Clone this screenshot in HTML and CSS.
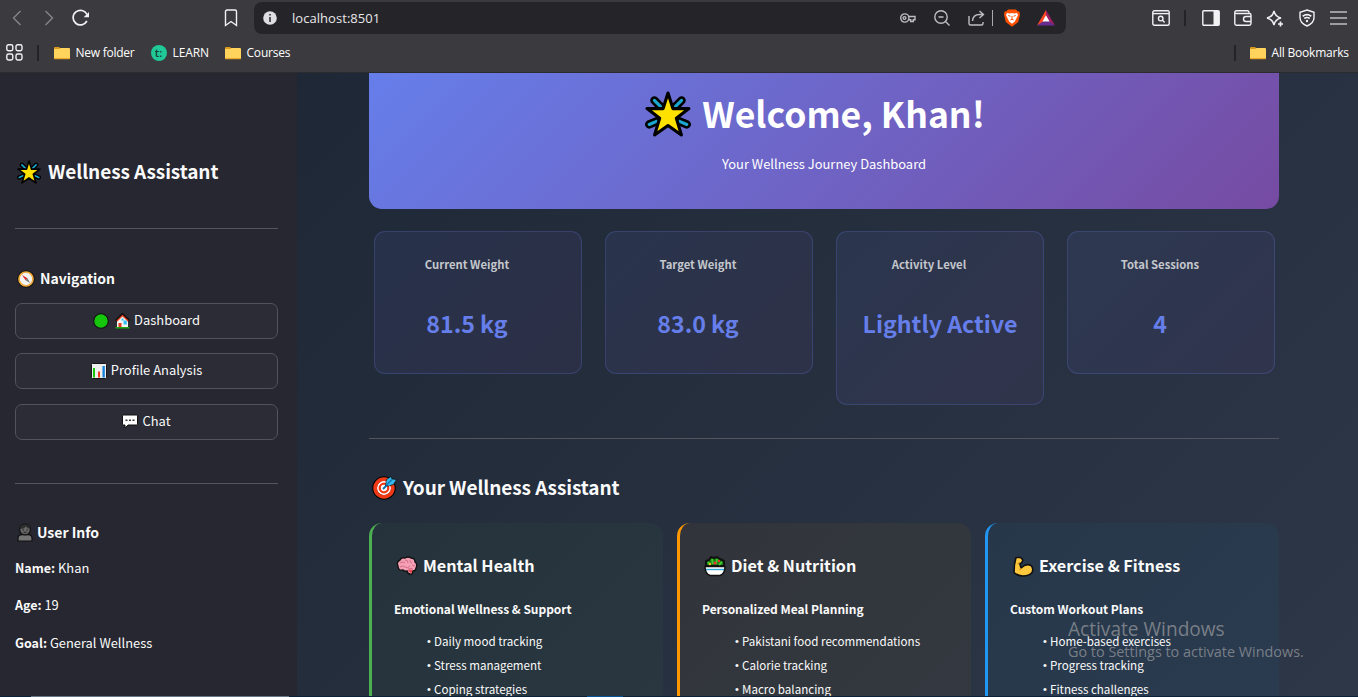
FILE: index.html
```
<!DOCTYPE html>
<html lang="en">
<head>
<meta charset="utf-8">
<title>Wellness Assistant</title>
<link rel="stylesheet" href="styles.css">
</head>
<body>
<svg class="defs" width="0" height="0" aria-hidden="true">
  <symbol id="star" viewBox="0 0 44 44">
    <g stroke="#000" stroke-width="8" stroke-linecap="round"><path d="M9 9l6 6M35 9l-6 6M4 32l7-3M40 32l-7-3"/></g>
    <g stroke="#1ba8d0" stroke-width="3" stroke-linecap="round"><path d="M9 9l6 6M35 9l-6 6M4 32l7-3M40 32l-7-3"/></g>
    <path d="M22 2l4.700 14.800H42L30 26l4.800 16L22 33 9.200 42 14 26 2 16.800h15.300z" fill="#ffe100" stroke="#000" stroke-width="3" stroke-linejoin="round"/>
  </symbol>
  <symbol id="folder" viewBox="0 0 16 14">
    <path d="M0 2a1 1 0 0 1 1-1h4l2 2H0z" fill="#d9991c"/><path d="M0 3h5l1.500-1H15a1 1 0 0 1 1 1v9a1 1 0 0 1-1 1H1a1 1 0 0 1-1-1z" fill="#ffd35c"/><path d="M0 12h16a1 1 0 0 1-1 1.200H1A1 1 0 0 1 0 12z" fill="#e5a62b"/>
  </symbol>
</svg>

<header class="chrome">
  <div class="toolbar">
    <div class="tools-left">
      <svg class="back" width="10" height="16" viewBox="0 0 10 16"><path d="M8.500 1L1.500 8l7 7" class="ln dim"/></svg>
      <svg class="fwd" width="10" height="16" viewBox="0 0 10 16"><path d="M1.500 1l7 7-7 7" class="ln dim"/></svg>
      <svg class="reload" width="18" height="18" viewBox="0 0 18 18"><path d="M14.900 12A7.300 7.300 0 1 1 15 5.500" class="ln w17"/><path d="M17 3v5.300h-5.300z" fill="#f2f2f4"/></svg>
      <svg class="mark" width="14" height="18" viewBox="0 0 14 18"><path d="M1.500 2.500q0-1.500 1.500-1.500h8q1.500 0 1.500 1.500V16.500L7 12.500 1.500 16.500z" class="ln"/></svg>
    </div>
    <div class="address">
      <svg class="info" width="14" height="14" viewBox="0 0 14 14"><circle cx="7" cy="7" r="6.800" fill="#dfdfe3"/><path d="M7 6v5M7 3v1.600" stroke="#28272c" stroke-width="1.500"/></svg>
      <span class="url">localhost:8501</span>
      <svg class="key" width="16" height="12" viewBox="0 0 16 12"><circle cx="4.800" cy="6" r="4.100" class="ln soft"/><circle cx="4.500" cy="6" r="1.400" class="ln soft"/><path d="M8.700 4.500H15v3.200h-1.700V9.500h-2.600V7.700H8.600" class="ln soft"/></svg>
      <svg class="mag" width="16" height="16" viewBox="0 0 16 16"><circle cx="7" cy="7" r="6.200" class="ln soft"/><path d="M4.500 7h5M11.500 11.500l4 4" class="ln soft"/></svg>
      <svg class="share" width="17" height="16" viewBox="0 0 17 16"><path d="M1 6v7.500Q1 15 2.500 15h11q1.500 0 1.500-1.500V12M4.500 11q.5-6.500 7-6.500h3.800M11.500 1l4 3.500-4 3.500" class="ln soft"/></svg>
      <span class="bar"></span>
      <svg class="brave" width="16" height="18" viewBox="0 0 16 18"><path d="M4 .5h8l1.500 1.800 1.800.2.700 3-1.800 7.500L8 17.700 1.800 13 0 5.500l.7-3 1.800-.2z" fill="#ff5000"/><path d="M3 4l3 .5L8 4l2 .5 3-.5 1 2.300-2.300 4.400-.9 1.700L8 14.800l-2.800-2.400-.9-1.700L2 6.300z" fill="#fff"/><path d="M4.300 6.500l2.200.8M11.700 6.500l-2.200.8M8 7v3.300M6.300 11L8 10.200l1.700.8" stroke="#ff5000" stroke-width="1" fill="none"/></svg>
      <svg class="bat" width="18" height="16" viewBox="0 0 18 16"><path d="M9 0L0 15.500l9-5z" fill="#ff4724"/><path d="M9 0l9 15.500-9-5z" fill="#9e1f63"/><path d="M0 15.500h18l-6-4H6z" fill="#662d91"/><path d="M9 5.300l3.500 6.300h-7z" fill="#fff"/></svg>
    </div>
    <div class="tools-right">
      <svg width="18" height="16" viewBox="0 0 18 16"><rect x=".8" y=".8" width="16.400" height="14.400" rx="1.500" class="ln"/><path d="M1 3.600h16" class="ln"/><circle cx="8.700" cy="8.600" r="2.300" class="ln"/><path d="M10.500 10.300l2.100 2.100" class="ln"/></svg>
      <span class="sep s1"></span>
      <svg class="panel" width="18" height="16" viewBox="0 0 18 16"><rect x=".8" y=".8" width="16.400" height="14.400" rx="1" class="ln"/><path d="M11.500 1H17v14h-5.500z" fill="#f2f2f4"/></svg>
      <svg class="wallet" width="18" height="16" viewBox="0 0 18 16"><path d="M15 3V2.200Q15 .8 13.500.8H2.500Q.8.800.8 2.500v11q0 1.700 1.700 1.700h12.800q1.700 0 1.700-1.700V5q0-1.500-1.500-1.500H2.500Q.8 3.500.8 2.300M17 6.500h-5a2.500 2.500 0 0 0 0 5h5" class="ln"/></svg>
      <svg class="spark" width="18" height="17" viewBox="0 0 18 17"><path d="M8 1q1.200 5.800 7 7-5.800 1.200-7 7Q6.800 9.200 1 8q5.800-1.200 7-7z" class="ln"/><path d="M12 14h5M14.500 11.500v5" stroke="#3b3a3e" stroke-width="3.500"/><path d="M12 14h5M14.500 11.500v5" class="ln w17"/></svg>
      <svg class="shield" width="16" height="18" viewBox="0 0 16 18"><path d="M8 1l7 2.300v5.200Q15 14 8 17 1 14 1 8.500V3.300z" class="ln"/><path d="M3.700 7.200q4.300-3.200 8.600 0M5.300 9.500q2.700-2 5.400 0" class="ln w17"/><circle cx="8" cy="12" r="1.200" fill="#f2f2f4"/></svg>
      <svg class="menu" width="17" height="14" viewBox="0 0 17 14"><path d="M0 1h17M0 7h17M0 13h17" class="ln soft"/></svg>
    </div>
  </div>
  <div class="bookmarks">
    <svg class="apps" width="17" height="17" viewBox="0 0 17 17"><g class="ln"><rect x=".8" y=".8" width="6" height="6" rx="1.700"/><rect x="10" y=".8" width="6" height="6" rx="1.700"/><rect x=".8" y="10" width="6" height="6" rx="1.700"/><rect x="10" y="10" width="6" height="6" rx="1.700"/></g></svg>
    <span class="sep s2"></span>
    <svg class="folder" width="16" height="14"><use href="#folder"/></svg><span class="bm b1">New folder</span>
    <span class="learn">t:</span><span class="bm b2">LEARN</span>
    <svg class="folder" width="16" height="14"><use href="#folder"/></svg><span class="bm b3">Courses</span>
    <span class="sep s3"></span>
    <svg class="folder" width="16" height="14"><use href="#folder"/></svg><span class="bm b4">All Bookmarks</span>
  </div>
</header>

<div class="page">
  <aside class="sidebar">
    <h2 class="side-title"><svg width="24" height="24"><use href="#star"/></svg><span>Wellness Assistant</span></h2>
    <hr class="rule r1">
    <h3 class="side-head nav-head"><svg width="18" height="18" viewBox="0 0 18 18"><circle cx="9" cy="9" r="7.500" fill="#eee" stroke="#111" stroke-width="2.600"/><circle cx="9" cy="9" r="7" fill="#f3f3f3" stroke="#efa83a" stroke-width="1.700"/><path d="M5 5l5.500 3.300-2 2z" fill="#e32b2b"/><path d="M13 13l-4.500-2.700 2-2z" fill="#777"/></svg><span>Navigation</span></h3>
    <nav class="nav">
      <button class="btn"><svg width="16" height="16" viewBox="0 0 16 16"><circle cx="8" cy="8" r="7.300" fill="#16c60c" stroke="#111" stroke-width="1.100"/></svg><svg class="house" width="15" height="16" viewBox="0 0 15 16"><path d="M2 7l5.500-5L13 7v7H2z" fill="#f4f4f4"/><path d="M.8 8L7.500 1.200 14.200 8" fill="none" stroke="#111" stroke-width="2.400"/><path d="M1.800 8L7.500 2.500 13.200 8" fill="none" stroke="#f03a17" stroke-width="1.200"/><path d="M3.500 10h3v4h-3z" fill="#e23b1d"/><path d="M8.500 7.500h3.300v4H8.500zM6.500 5.500h2v2h-2z" fill="#35c1f1"/><path d="M.5 14h14v1.500H.5z" fill="#16a80c"/></svg><span>Dashboard</span></button>
      <button class="btn"><svg width="16" height="16" viewBox="0 0 16 16"><rect x=".5" y=".5" width="15" height="15" rx="1" fill="#eee" stroke="#151515"/><path d="M2 5h2v9.500H2z" fill="#16c60c"/><path d="M7 8.500h2v6H7z" fill="#f03a17"/><path d="M11.500 3h2.300v11.500h-2.300z" fill="#1080dd"/></svg><span>Profile Analysis</span></button>
      <button class="btn"><svg width="16" height="15" viewBox="0 0 16 15"><path d="M1.500 1h13q1 0 1 1v8q0 1-1 1H6l-3 3v-3H1.500q-1 0-1-1V2q0-1 1-1z" fill="#fff" stroke="#111"/><path d="M3.500 5.500h2v1.500h-2zM7 5.500h2v1.500H7zM10.500 5.500h2v1.500h-2z" fill="#333"/></svg><span>Chat</span></button>
    </nav>
    <hr class="rule r2">
    <h3 class="side-head user-head"><svg width="16" height="19" viewBox="0 0 16 19"><path d="M1 18v-3q0-3 4-3.300h6q4 .3 4 3.300v3z" fill="#747474" stroke="#111" stroke-width="1.200"/><circle cx="8" cy="6.500" r="5.400" fill="#666" stroke="#111" stroke-width="1.200"/><path d="M2.800 6Q3 1.500 8 1.400 13 1.500 13.200 6 10 5 9 3.500 7 6 2.800 6z" fill="#2e2e2e"/><path d="M5.500 7h1.400M9.500 7h1.400M6.500 9.300h3" stroke="#222"/></svg><span>User Info</span></h3>
    <p class="fact"><b>Name:</b> Khan</p>
    <p class="fact"><b>Age:</b> 19</p>
    <p class="fact"><b>Goal:</b> General Wellness</p>
  </aside>

  <main class="main">
    <section class="hero">
      <h1><svg width="46" height="46"><use href="#star"/></svg><span>Welcome, Khan!</span></h1>
      <p>Your Wellness Journey Dashboard</p>
    </section>
    <section class="metrics">
      <div class="metric"><h4>Current Weight</h4><strong>81.5 kg</strong></div>
      <div class="metric"><h4>Target Weight</h4><strong>83.0 kg</strong></div>
      <div class="metric tall"><h4>Activity Level</h4><strong>Lightly Active</strong></div>
      <div class="metric"><h4>Total Sessions</h4><strong>4</strong></div>
    </section>
    <hr class="rule r3">
    <h2 class="section-title"><svg width="25" height="25" viewBox="0 0 25 25"><circle cx="12" cy="13" r="9.500" fill="#fff" stroke="#000" stroke-width="4.600"/><circle cx="12" cy="13" r="8.800" fill="none" stroke="#f03a17" stroke-width="3.800"/><circle cx="12" cy="13" r="4.300" fill="#fff" stroke="#f03a17" stroke-width="2.300"/><path d="M11 14l6-6" stroke="#0872b5" stroke-width="2"/><path d="M13.500 10.500l1-6 4.500-3 1 2.500 4.500.5-3 5-5 1.500z" fill="#35b8ec" stroke="#000" stroke-width=".6"/><path d="M14 10.500l6-6" stroke="#0872b5" stroke-width="1.300"/></svg><span>Your Wellness Assistant</span></h2>
    <section class="features">
      <article class="feature green">
        <h3><svg width="22" height="20" viewBox="0 0 22 20"><path d="M2 10Q0 6 4 4 5 1 9 2q3-2 6 0 4 0 4 4 3 2 1 6 0 3-3 3l-1 3q-4 1-5-3-2 1-4-1-5 1-5-4z" fill="#f5a0b5" stroke="#111" stroke-width="1.400"/><path d="M4 7q3-2 5 0M9 4q3 0 3 3M14 4q-1 2 2 3M4 11q2-2 5 0t5-1M12 13q3-1 5 0M16 9l3 1" fill="none" stroke="#cf6683" stroke-width=".9"/><path d="M12 14q3-1 4 0v3q-3 0-4-3z" fill="#e74856"/></svg><span>Mental Health</span></h3>
        <h5>Emotional Wellness &amp; Support</h5>
        <ul><li>Daily mood tracking</li><li>Stress management</li><li>Coping strategies</li></ul>
      </article>
      <article class="feature orange">
        <h3><svg width="22" height="21" viewBox="0 0 22 21"><path d="M2 10V5l3-1 2-3 3 1 3-1 3 2 4 2v5z" fill="#167d13" stroke="#111" stroke-width="2" stroke-linejoin="round"/><path d="M4 6l2 3M8 3l1 5M13 3l-1 5M18 6l-3 3" stroke="#3fcb2e" stroke-width="2"/><circle cx="11" cy="7" r="1.600" fill="#e9362c"/><circle cx="15" cy="5" r="1.200" fill="#e9362c"/><circle cx="6" cy="8" r="1.200" fill="#f7b42c"/><path d="M1 10.500h20q0 7-5 9H6q-5-2-5-9z" fill="#fff" stroke="#111" stroke-width="1.400"/><path d="M2 13.500h18" stroke="#30a9d6" stroke-width="1.400"/></svg><span>Diet &amp; Nutrition</span></h3>
        <h5>Personalized Meal Planning</h5>
        <ul><li>Pakistani food recommendations</li><li>Calorie tracking</li><li>Macro balancing</li></ul>
      </article>
      <article class="feature blue">
        <h3><svg width="22" height="21" viewBox="0 0 22 21"><path d="M4 1.500h4.500L11 4 9.500 7 7.800 7.500 9 12q5-5 10-2.500 3 3 1 7-3 3.500-9 3.500-5 0-9-3.500Q2 8 4 1.500z" fill="#ffc83d" stroke="#111" stroke-width="1.600" stroke-linejoin="round"/><path d="M7.500 7L5.500 8M9 12l-1.500 2" stroke="#c98a14" stroke-width="1.200"/></svg><span>Exercise &amp; Fitness</span></h3>
        <h5>Custom Workout Plans</h5>
        <ul><li>Home-based exercises</li><li>Progress tracking</li><li>Fitness challenges</li></ul>
      </article>
    </section>
  </main>
</div>
<div class="strip"></div>
<div class="watermark"><div class="wm1">Activate Windows</div><div class="wm2">Go to Settings to activate Windows.</div></div>
</body>
</html>
```
FILE: styles.css
```
* { box-sizing: border-box; margin: 0; padding: 0; }
body { width: 1358px; height: 697px; overflow: hidden; display: flex; flex-direction: column; background: #262730; color: #fafafa; font-family: "Noto Sans CJK SC", "Noto Sans", sans-serif; white-space: nowrap; position: relative; }
svg { display: block; flex: none; }
.defs { position: absolute; }
.ln { fill: none; stroke: #f2f2f4; stroke-width: 1.4; }
.dim { stroke: #85858a; }
.soft { stroke: #bdbdc2; }
.w17 { stroke-width: 1.7; }

.chrome { flex: none; height: 73px; background: #3b3a3e; border-bottom: 1px solid #2c2b30; font-family: "Open Sans", sans-serif; }
.toolbar { height: 36px; display: flex; align-items: center; }
.tools-left { width: 254px; display: flex; align-items: center; padding-left: 12px; }
.fwd { margin-left: 22px; }
.reload { margin-left: 18px; }
.mark { margin-left: 134px; }
.address { width: 812px; height: 32px; border-radius: 8px; background: #252429; display: flex; align-items: center; padding-left: 9px; }
.url { margin-left: 15px; width: 608px; font-size: 13px; letter-spacing: .05px; color: #e8e8ea; }
.mag { margin-left: 18px; }
.share { margin-left: 18px; }
.bar { width: 1px; height: 16px; margin-left: 7px; background: #aaa; }
.brave { margin-left: 11px; }
.bat { margin-left: 17px; }
.tools-right { display: flex; align-items: center; padding-left: 86px; }
.sep { width: 2px; height: 16px; background: #242328; flex: none; }
.s1 { margin-left: 14px; }
.panel { margin-left: 16px; }
.wallet { margin-left: 14px; }
.spark { margin-left: 14px; }
.shield { margin-left: 15px; }
.menu { margin-left: 15px; }
.bookmarks { height: 33px; display: flex; align-items: center; padding-left: 6px; font-size: 12px; color: #fff; }
.s2 { margin: 0 15px 0 14px; width: 1.500px; }
.bm { letter-spacing: -.25px; margin-left: 6px; flex: none; }
.b1 { width: 75px; }
.b2 { width: 52px; letter-spacing: -.1px; }
.learn { flex: none; width: 16px; height: 16px; border-radius: 50%; background: #20c997; color: #173c35; font-size: 11px; line-height: 15px; text-align: center; font-weight: 600; }
.b3 { width: 987px; letter-spacing: -.2px; }
.b3 + .s3 { margin-right: 14px; }
.b4 { letter-spacing: -.2px; }

.page { flex: none; height: 623px; display: flex; background: linear-gradient(135deg, #1c2532 0%, #2d3748 100%); overflow: hidden; }
.sidebar { width: 297px; background: #262730; padding: 86px 19px 0 15px; flex: none; }
.rule { border: 0; height: 1px; background: #54555e; }
.side-title { height: 26px; display: flex; align-items: center; font-size: 19px; letter-spacing: -.08px; line-height: 24px; padding-left: 2px; }
.side-title span { margin-left: 7px; padding-bottom: 2px; }
.r1 { margin-top: 43px; }
.side-head { height: 24px; display: flex; align-items: center; font-size: 14px; line-height: 22px; padding-left: 2px; }
.side-head span { margin-left: 5px; padding-bottom: 2px; }
.nav-head { margin-top: 38px; }
.nav { display: flex; flex-direction: column; gap: 14.400px; margin-top: 12px; }
.btn { height: 36px; border: 1px solid #52535b; border-radius: 7px; background: #2b2c36; color: #fafafa; font: 12.950px/18px "Noto Sans CJK SC", sans-serif; display: flex; justify-content: center; align-items: center; gap: 4px; }
.btn span { padding-bottom: 2px; }
.btn svg { margin-bottom: 1px; }
.house { margin-left: 2px; }
.r2 { margin-top: 43px; }
.user-head { margin-top: 37px; }
.user-head span { margin-left: 4px; }
.fact { height: 20px; line-height: 20px; margin-top: 17.700px; font-size: 12.900px; }
.fact b { font-size: 12.500px; }
.user-head + .fact { margin-top: 13px; }

.main { width: 910px; margin-left: 72px; flex: none; }
.hero { height: 136px; border-radius: 0 0 13px 13px; background: linear-gradient(135deg, #667eea 0%, #764ba2 100%); text-align: center; padding-top: 13px; color: #fff; }
.hero h1 { display: flex; justify-content: center; align-items: center; height: 56px; font-size: 35.500px; line-height: 54px; padding-right: 18px; }
.hero h1 span { margin-left: 11px; padding-bottom: 2px; }
.hero h1 svg { margin-bottom: 0; }
.hero p { font-size: 12.950px; line-height: 20px; margin-top: 12px; }
.metrics { display: flex; gap: 23px; align-items: flex-start; height: 207px; padding: 22px 5px 0; }
.metric { flex: none; width: 208px; height: 143px; border: 1px solid rgba(102,126,234,.23); border-radius: 11px; background: linear-gradient(135deg, rgba(102,126,234,.1), rgba(118,75,162,.1)); display: flex; flex-direction: column; align-items: center; padding: 22px 22px 0 0; }
.metric.tall { height: 174px; }
.metric.tall strong { margin-right: -22px; }
.metric h4 { font-size: 11.300px; line-height: 20px; color: #c4c7cc; }
.metric strong { font-size: 23.200px; line-height: 34px; margin-top: 32px; color: #667eea; }
.r3 { margin-top: 22px; }
.section-title { height: 30px; display: flex; align-items: center; font-size: 19px; letter-spacing: -.08px; line-height: 28px; margin-top: 34px; padding-left: 3px; }
.section-title span { margin-left: 6px; padding-bottom: 2px; }
.section-title svg { margin-bottom: 2px; }
.features { display: flex; gap: 14px; margin-top: 20px; }
.feature { width: 294px; height: 220px; border-left: 3px solid; border-radius: 13px; padding: 28px 0 0 22px; flex: none; }
.green { border-color: #4caf50; background: rgba(76,175,80,.05); }
.orange { border-color: #ff9800; background: rgba(255,152,0,.05); }
.blue { border-color: #2196f3; background: rgba(33,150,243,.05); }
.feature h3 { height: 30px; display: flex; align-items: center; font-size: 16.200px; line-height: 28px; padding-left: 2px; }
.feature h3 span { margin-left: 5px; padding-bottom: 2px; }
.feature h5 { font-size: 12px; letter-spacing: -.03px; line-height: 20px; margin-top: 18px; }
.feature ul { list-style: none; margin: 10px 0 0 33px; }
.feature li { display: flex; height: 24px; font-size: 11.600px; line-height: 24px; }
.feature li::before { content: "•"; width: 7px; flex: none; font-family: "Liberation Sans", sans-serif; font-size: 11px; }
.strip { flex: none; height: 1px; background: linear-gradient(90deg, transparent 31px, #687886 31px, #687886 289px, transparent 289px, transparent 587px, #075499 587px, #075499 623px, transparent 623px), #0b2238; }
.watermark { position: absolute; left: 1068px; top: 616px; color: rgba(180,180,180,.58); font-family: "Open Sans", sans-serif; }
.wm1 { font-size: 19.100px; line-height: 26px; }
.wm2 { font-size: 14.400px; line-height: 20px; }
```
